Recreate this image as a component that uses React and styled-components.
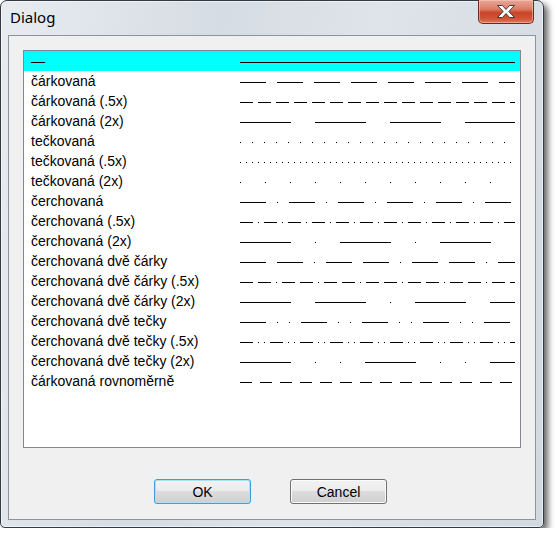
import React from 'react'
import styled, { createGlobalStyle } from 'styled-components'

const GlobalStyle = createGlobalStyle`
  body {
    margin: 0;
    background: #fff;
    font-family: "Liberation Sans", Arial, sans-serif;
  }
`

const Window = styled.div`
  width: 544px;
  height: 528px;
  box-sizing: border-box;
  display: flex;
  flex-direction: column;
  border: 1px solid #323a45;
  border-radius: 7px 7px 5px 5px;
  background: linear-gradient(100deg, #e8ecf1 0%, #d6dce3 35%, #dfe4ea 60%, #d3d9e0 100%);
  box-shadow: inset 0 0 0 1px rgba(255, 255, 255, 0.55), 4px 4px 6px rgba(0, 0, 0, 0.6);
`

const TitleBar = styled.div`
  height: 34px;
  flex: none;
  display: flex;
  align-items: flex-start;
  justify-content: space-between;
`

const Title = styled.div`
  font-family: "Noto Sans", "Open Sans", sans-serif;
  font-size: 15px;
  color: #000;
  margin: 6px 0 0 9px;
`

const CloseButton = styled.div`
  width: 56px;
  height: 24px;
  margin: -1px 9px 0 0;
  box-sizing: border-box;
  display: flex;
  align-items: center;
  justify-content: center;
  border: 1px solid #6b2a1c;
  border-top: none;
  border-radius: 0 0 5px 5px;
  background: linear-gradient(#e9a898 0%, #dc7b63 40%, #c8442a 55%, #cf5335 80%, #e07a5c 100%);
  box-shadow: inset 0 0 0 1px rgba(255, 210, 200, 0.5);
`

const Client = styled.div`
  flex: 1;
  margin: 0 7px 7px 7px;
  border: 1px solid #8d949c;
  background: #f0f0f0;
  display: flex;
  flex-direction: column;
  padding: 14px 14px 0 14px;
`

const ListBox = styled.div`
  height: 398px;
  box-sizing: border-box;
  border: 1px solid #828790;
  background: #fff;
  display: flex;
  flex-direction: column;
`

const Row = styled.div`
  height: 20px;
  flex: none;
  display: grid;
  grid-template-columns: 216px 1fr;
  align-items: start;
  background: ${p => (p.$selected ? '#00ffff' : 'transparent')};
`

const Name = styled.span`
  font-size: 14px;
  line-height: 20px;
  padding-left: 7px;
  color: #000;
  white-space: nowrap;
`

const ButtonRow = styled.div`
  display: flex;
  justify-content: center;
  gap: 39px;
  margin-top: 31px;
  padding-right: 3px;
`

const Button = styled.div`
  width: 97px;
  height: 25px;
  box-sizing: border-box;
  display: flex;
  align-items: center;
  justify-content: center;
  font-size: 14px;
  color: #000;
  border-radius: 3px;
  border: 1px solid ${p => (p.$default ? '#3c9fd6' : '#707070')};
  background: linear-gradient(#f2f2f2 0%, #ebebeb 50%, #dddddd 50%, #cfcfcf 100%);
  box-shadow: inset 0 0 0 1px ${p => (p.$default ? '#a9e2f7' : '#fbfbfb')};
`

const lineTypes = [
  { name: '—', dash: null, selected: true },
  { name: 'čárkovaná', dash: '26 11' },
  { name: 'čárkovaná (.5x)', dash: '13 5' },
  { name: 'čárkovaná (2x)', dash: '51 24' },
  { name: 'tečkovaná', dash: '1 11' },
  { name: 'tečkovaná (.5x)', dash: '1 5' },
  { name: 'tečkovaná (2x)', dash: '1 24' },
  { name: 'čerchovaná', dash: '26 11 1 11' },
  { name: 'čerchovaná (.5x)', dash: '13 5 1 5' },
  { name: 'čerchovaná (2x)', dash: '51 24 1 24' },
  { name: 'čerchovaná dvě čárky', dash: '26 11 26 11 1 11' },
  { name: 'čerchovaná dvě čárky (.5x)', dash: '13 5 13 5 1 5' },
  { name: 'čerchovaná dvě čárky (2x)', dash: '51 24 51 24 1 24' },
  { name: 'čerchovaná dvě tečky', dash: '26 11 1 11 1 11' },
  { name: 'čerchovaná dvě tečky (.5x)', dash: '13 5 1 5 1 5' },
  { name: 'čerchovaná dvě tečky (2x)', dash: '51 24 1 24 1 24' },
  { name: 'čárkovaná rovnoměrně', dash: '12 8' },
]

function LinePreview({ dash }) {
  return (
    <svg width="275" height="20" shapeRendering="crispEdges">
      <line x1="0" y1="11.5" x2="275" y2="11.5" stroke="#000" strokeWidth="1" strokeDasharray={dash || undefined} />
    </svg>
  )
}

function CloseIcon() {
  return (
    <svg width="20" height="15" viewBox="0 0 20 15">
      <path
        d="M1.5 1.5 H6.5 L10 5.5 L13.5 1.5 H18.5 L12.8 7.5 L18.5 13.5 H13.5 L10 9.5 L6.5 13.5 H1.5 L7.2 7.5 Z"
        fill="#fff"
        stroke="#3f3f3f"
        strokeWidth="1"
        strokeLinejoin="round"
      />
    </svg>
  )
}

export default function App() {
  return (
    <>
      <GlobalStyle />
      <Window>
        <TitleBar>
          <Title>Dialog</Title>
          <CloseButton>
            <CloseIcon />
          </CloseButton>
        </TitleBar>
        <Client>
          <ListBox>
            {lineTypes.map(t => (
              <Row key={t.name} $selected={t.selected}>
                <Name>{t.name}</Name>
                <LinePreview dash={t.dash} />
              </Row>
            ))}
          </ListBox>
          <ButtonRow>
            <Button $default>OK</Button>
            <Button>Cancel</Button>
          </ButtonRow>
        </Client>
      </Window>
    </>
  )
}
